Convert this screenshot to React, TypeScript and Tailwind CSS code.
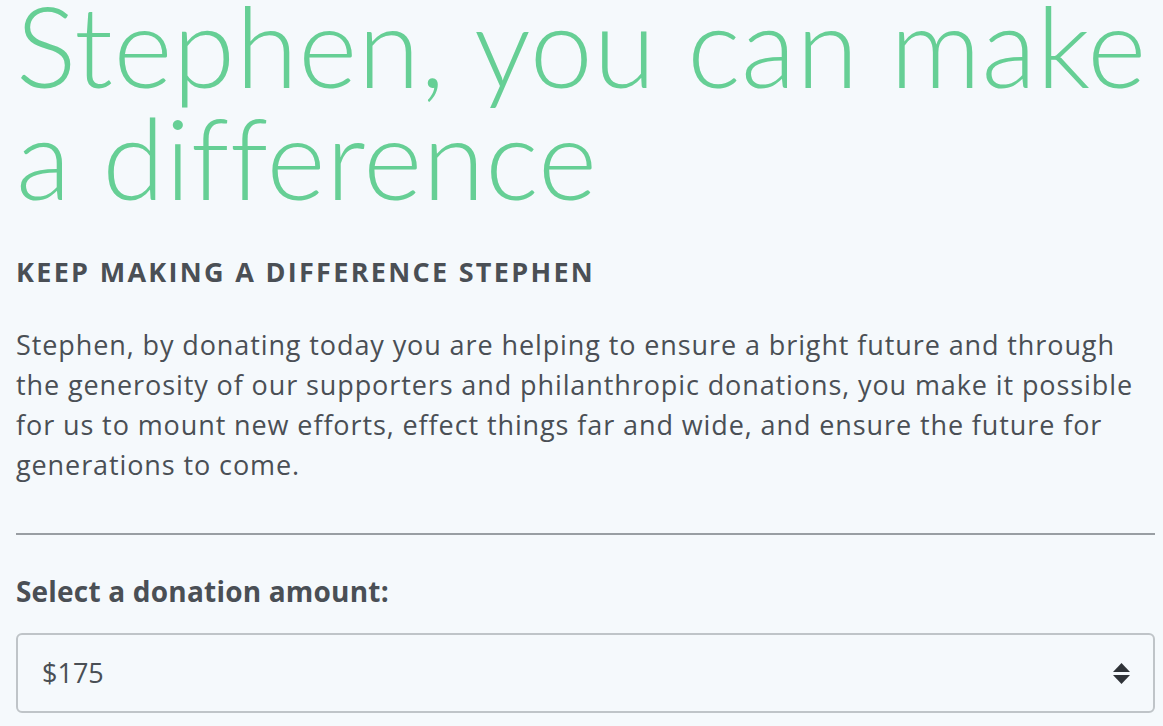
export default function App() {
  return (
    <div
      className="flex min-h-[726px] flex-col bg-[#f5f9fc] pl-4 pr-2 text-[#4a4f55]"
      style={{ fontFamily: '"Open Sans", Lato, sans-serif' }}
    >
      <h1
        className="-mt-3 text-[113px] font-light leading-[112px] tracking-[0.5px] text-[#66cf95]"
        style={{ fontFamily: 'Lato, "Open Sans", sans-serif' }}
      >
        Stephen, you can make a difference
      </h1>
      <h2 className="mt-[44px] text-[27px] font-bold uppercase leading-8 tracking-[2.3px] text-[#4a4f55]">
        Keep making a difference Stephen
      </h2>
      <p className="mt-[37px] text-[27px] leading-10 tracking-[0.9px]">
        Stephen, by donating today you are helping to ensure a bright future and through the generosity of
        our supporters and philanthropic donations, you make it possible for us to mount new efforts, effect
        things far and wide, and ensure the future for generations to come.
      </p>
      <hr className="mt-[48px] border-t-2 border-[#999ea3]" />
      <label className="mt-[40px] block text-[28px] font-bold leading-8 tracking-[0.2px]">
        Select a donation amount:
      </label>
      <div className="mt-[26px] flex h-[80px] items-center justify-between rounded-md border-2 border-[#bfc4c8] bg-[#f5f9fc] pl-6 pr-[23px]">
        <span className="text-[27px]">$175</span>
        <svg width="17" height="21" viewBox="0 0 17 21" className="text-[#2f3338]">
          <path d="M8.5 0 L17 9 L0 9 Z" fill="currentColor" />
          <path d="M8.5 21 L17 12 L0 12 Z" fill="currentColor" />
        </svg>
      </div>
    </div>
  );
}
